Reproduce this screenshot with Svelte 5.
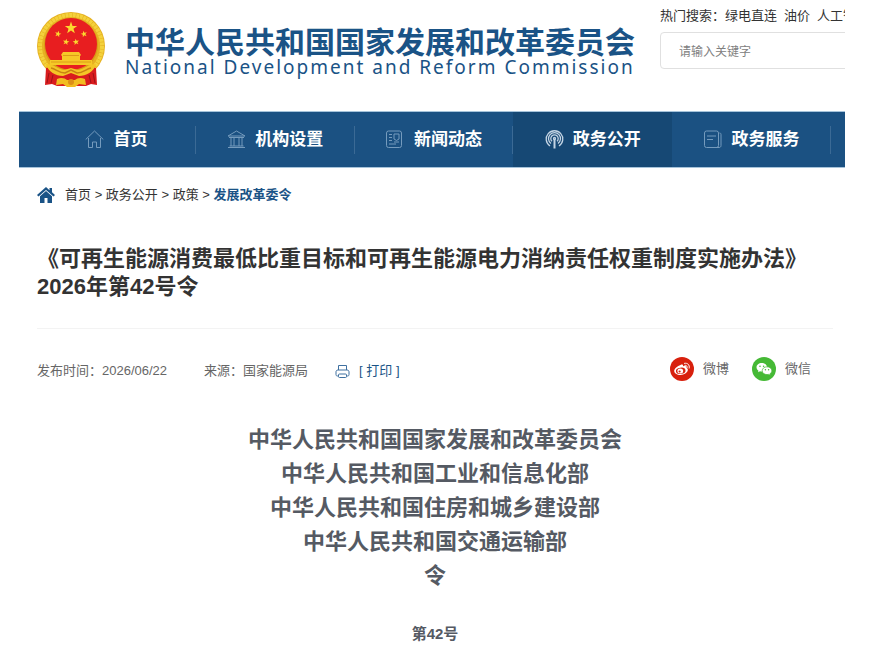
<script>
  const hotWords = ['绿电直连', '油价', '人工智能'];

  const navItems = [
    { label: '首页', icon: 'home' },
    { label: '机构设置', icon: 'org' },
    { label: '新闻动态', icon: 'news' },
    { label: '政务公开', icon: 'open', active: true },
    { label: '政务服务', icon: 'service' },
  ];

  const crumbs = ['首页', '政务公开', '政策'];

  const issuers = [
    '中华人民共和国国家发展和改革委员会',
    '中华人民共和国工业和信息化部',
    '中华人民共和国住房和城乡建设部',
    '中华人民共和国交通运输部',
    '令',
  ];

  let keyword = $state('');

  // points of a five-pointed star
  const star = (cx, cy, r, turn = 0) =>
    Array.from({ length: 10 }, (_, i) => {
      const a = ((i * 36 - 90 + turn) * Math.PI) / 180;
      const d = i % 2 ? r * 0.4 : r;
      return `${(cx + d * Math.cos(a)).toFixed(2)},${(cy + d * Math.sin(a)).toFixed(2)}`;
    }).join(' ');
</script>

<div class="page">
  <header>
    <a class="brand" href="#home">
      <svg class="emblem" viewBox="0 0 69 75" aria-hidden="true">
        <circle cx="34" cy="34" r="34" fill="#e6b122" />
        <circle cx="34" cy="34" r="31" fill="none" stroke="#f4d23c" stroke-width="4" stroke-dasharray="3 .6" />
        <circle cx="34" cy="33" r="27" fill="#d99a16" />
        <circle cx="34" cy="32" r="26" fill="#e81e20" />
        <g fill="#fbd92f">
          <polygon points={star(34, 16, 6.5)} />
          <polygon points={star(21, 22, 3.4, 15)} />
          <polygon points={star(47, 22, 3.4, -15)} />
          <polygon points={star(29, 30, 3.4, 10)} />
          <polygon points={star(39, 30, 3.4, -10)} />
        </g>
        <path d="M26 40h16l2 3-1 1v4h12v5H13v-5h12v-4l-1-1z" fill="#f6c927" />
        <path d="M26 43.500h16M14 50h40" stroke="#dd9c18" stroke-width="1" />
        <path d="M9 56c7-3 12 3 17 5h16c5-2 10-8 17-5l1 17-6-1-5 2H20l-5-2-7 1z" fill="#d91c1e" />
        <path d="M9 52c7 0 12 5 18 6l7-2 7 2c6-1 11-6 18-6-2 8-10 12-17 12l-8-3-8 3C19 64 11 60 9 52z" fill="#f4c526" />
        <path d="M14 56c5 1 8 5 14 5l6-3 6 3c6 0 9-4 14-5" fill="none" stroke="#c98312" stroke-width="1.500" />
        <path d="M20 67c4-2 8-1 10 1h8c2-2 6-3 10-1l1 6-7-1-4 3h-8l-4-3-7 1z" fill="#f2bd22" />
        <circle cx="34" cy="70" r="3" fill="#dc8f18" />
        <path d="M12 61l-2 10M16 63l-2 8M56 61l2 10M52 63l2 8" stroke="#9f1218" stroke-width="1" />
      </svg>
      <span class="brand-text">
        <span class="brand-cn">中华人民共和国国家发展和改革委员会</span>
        <span class="brand-en" lang="en">National Development and Reform Commission</span>
      </span>
    </a>

    <form class="search" onsubmit={(e) => e.preventDefault()}>
      <p>
        热门搜索：{#each hotWords as word}<a href="#search">{word}</a>{/each}
      </p>
      <input type="text" aria-label="关键字" placeholder="请输入关键字" bind:value={keyword} />
    </form>
  </header>

  <nav>
    {#each navItems as item}
      <a href="#nav" class:active={item.active}>
        <svg viewBox="0 0 19 19" aria-hidden="true">
          {#if item.icon === 'home'}
            <path d="M.7 9.500L9.500 1l8.800 8.500M3.500 8v9.500h4V12h4v5.500h4V8" />
          {:else if item.icon === 'org'}
            <path d="M1 6L9.500 1 18 6zM2 7.500h15M4 8v8M7 8v8M12 8v8M15 8v8M2.500 16h14M1 17.500h17" />
          {:else if item.icon === 'news'}
            <rect x=".5" y="1" width="15" height="16.500" rx="2" />
            <path d="M3 4.500h3M3 7.500h3M3 10.500h3M3 14h7M8 4h5v5l-2.500 1.500L8 9zM8 12h5" />
          {:else if item.icon === 'open'}
            <path d="M5 16a8.300 8.300 0 1 1 9 0M6 13.500a6 6 0 1 1 7 0M7 11.300a3.700 3.700 0 1 1 5 0" />
            <path d="M9.500 9v9.500" stroke-width="2" />
            <circle cx="9.500" cy="8.500" r="1" />
          {:else}
            <rect x=".5" y="1" width="14" height="16.500" rx="2" />
            <path d="M3 6h9M3 9.500h6M15.500 3c1.500 0 1.500 1 1.500 2v10.500c0 1.500-1 2-2 2h-3" />
          {/if}
        </svg>
        <span>{item.label}</span>
      </a>
    {/each}
  </nav>

  <main>
    <div class="crumbs">
      <svg viewBox="0 0 18 16" aria-hidden="true">
        <path d="M9 0L0 8l1.500 1.500L9 3l7.500 6.500L18 8l-3-2.700V1h-2.500v2.200z" />
        <path d="M9 4L3 9.200V16h4.500v-5h3v5H15V9.200z" />
      </svg>
      <span>
        {#each crumbs as crumb}<a href="#crumb">{crumb}</a>{' > '}{/each}<a class="current" href="#crumb">发展改革委令</a>
      </span>
    </div>

    <h1>《可再生能源消费最低比重目标和可再生能源电力消纳责任权重制度实施办法》2026年第42号令</h1>

    <div class="meta">
      <span class="date">发布时间：<time datetime="2026-06-22">2026/06/22</time></span>
      <span class="source">来源：国家能源局</span>
      <button type="button" class="print" onclick={() => window.print()}>
        <svg viewBox="0 0 15 15" aria-hidden="true">
          <path d="M3.500 6V1.500h8V6M3.500 12H2.500C1.500 12 1 11.500 1 10.500V8c0-1 .5-2 2-2h9c1.500 0 2 1 2 2v2.500c0 1-.5 1.500-1.500 1.500h-1" />
          <rect x="3.500" y="10" width="8" height="3.500" rx="1" />
        </svg>
        [ 打印 ]
      </button>
      <div class="share">
        <a href="#weibo">
          <svg viewBox="0 0 24 24" aria-hidden="true">
            <circle cx="12" cy="12" r="12" fill="#d8200d" />
            <path d="M10.500 8c1.500-.8 3-.5 2.500 1.300 2-.7 3.800-.3 3.200 1.500 1.300.4 1.900 1.300 1.600 2.500-.5 2.500-3.600 4.700-7.300 4.700-3.600 0-6.300-1.700-6.300-4.200C4.200 11.700 7.500 9 10.500 8z" fill="#fff" />
            <ellipse cx="10.700" cy="13.800" rx="4.800" ry="3.100" transform="rotate(-8 10.700 13.800)" fill="#d8200d" />
            <ellipse cx="10.300" cy="14" rx="2.900" ry="2.500" fill="#fff" />
            <circle cx="9.600" cy="14.500" r="1.100" fill="#d8200d" />
            <path d="M14.500 6.300c3-.7 5.500 1.600 4.700 4.800M14.900 8.300c1.500-.3 2.600.9 2.200 2.300" fill="none" stroke="#fff" stroke-linecap="round" />
          </svg>
          微博
        </a>
        <a href="#wechat">
          <svg viewBox="0 0 24 24" aria-hidden="true">
            <circle cx="12" cy="12" r="12" fill="#45b935" />
            <path d="M9.800 6C6.800 6 4.500 7.900 4.500 10.300c0 1.400.8 2.600 2 3.400L6 15.300l2-1c.6.2 1.200.3 1.800.3 3 0 5.300-1.900 5.300-4.300S12.800 6 9.800 6z" fill="#fff" />
            <path d="M15 9.800c-2.700 0-4.800 1.700-4.800 3.900s2.100 3.900 4.800 3.900c.6 0 1.100-.1 1.600-.2l1.700.9-.4-1.500c1.200-.7 1.900-1.800 1.900-3.100 0-2.200-2.100-3.900-4.800-3.900z" fill="#fff" stroke="#45b935" stroke-width=".7" />
            <g fill="#45b935">
              <circle cx="8" cy="9.200" r=".8" />
              <circle cx="11.600" cy="9.200" r=".8" />
              <circle cx="13.400" cy="12.700" r=".7" />
              <circle cx="16.600" cy="12.700" r=".7" />
            </g>
          </svg>
          微信
        </a>
      </div>
    </div>

    <article>
      <h2>
        {#each issuers as line}<span>{line}</span>{/each}
      </h2>
      <p>第42号</p>
    </article>
  </main>
</div>

<style>
  :global(body) { margin: 0; background: #fff; }

  .page {
    margin: 0 28px 0 19px;
    font: 13px/20px "Liberation Sans", "Noto Sans CJK SC", sans-serif;
    color: #333;
  }
  a { color: inherit; text-decoration: none; }
  svg { display: block; flex: none; }

  header {
    display: flex; align-items: flex-start;
    height: 111px; padding-left: 18px; overflow: hidden;
  }
  .brand { display: flex; gap: 19px; padding-top: 12px; color: #1a5386; white-space: nowrap; }
  .emblem { width: 69px; height: 75px; }
  .brand-text { display: flex; flex-direction: column; padding-top: 18px; }
  .brand-cn { font-size: 30px; line-height: 26px; font-weight: bold; }
  .brand-en { font: 19px/22px "Noto Sans", "Open Sans", sans-serif; letter-spacing: 2px; }

  /* the search box runs past the right edge of the header */
  .search { flex: none; width: 260px; margin-left: auto; margin-right: -75px; padding-top: 6px; }
  .search p { margin: 0; white-space: nowrap; }
  .search a { margin-right: 7px; }
  .search input {
    box-sizing: border-box; width: 100%; height: 37px; margin-top: 6px; padding: 0 18px;
    border: 1px solid #e0e0e0; border-radius: 4px; background: #fff; outline: none;
    font: 12px "Noto Sans CJK SC", sans-serif; color: #333;
  }
  .search input::placeholder { color: #808080; opacity: 1; }

  nav {
    display: flex; height: 55px; padding: 0 14px 0 18px;
    background: #1b5182; border-top: 1px solid #a6c3da; border-bottom: 1px solid #a6c3da;
  }
  nav a {
    flex: 1; display: flex; align-items: center; justify-content: center; gap: 9px;
    color: #fff; font-size: 17px; font-weight: bold; white-space: nowrap;
    background: linear-gradient(#3b6a95, #3b6a95) right center / 1px 28px no-repeat;
  }
  nav a.active { background: #164874; }
  nav svg {
    width: 19px; height: 19px;
    fill: none; stroke: #759bbd; stroke-width: 1;
  }
  nav a.active svg { stroke: #c3d4e4; stroke-width: 1.3; }

  main { padding: 0 12px 0 18px; }

  .crumbs { display: flex; align-items: center; gap: 10px; padding-top: 17px; }
  .crumbs svg { width: 18px; height: 16px; fill: #1a5386; }
  .crumbs .current { color: #1a5386; font-weight: bold; }

  h1 {
    margin: 40px 0 0; padding-bottom: 27px; border-bottom: 1px solid #f3f3f3;
    font-size: 22px; line-height: 28px;
  }

  .meta { display: flex; align-items: flex-end; padding: 28px 22px 0 0; color: #666; }
  .source { margin-left: 37px; }
  .print {
    display: flex; align-items: center; gap: 9px; margin-left: 27px; padding: 0;
    border: 0; background: none; font: inherit; color: #1a5386; cursor: pointer;
  }
  .print svg { width: 15px; height: 15px; fill: none; stroke: #3f70a0; }
  .share { display: flex; gap: 23px; margin-left: auto; }
  .share a { display: flex; align-items: center; gap: 9px; }
  .share svg { width: 24px; height: 24px; }

  article { padding-top: 42px; text-align: center; color: #555a63; font-weight: bold; }
  h2 { margin: 0; font-size: 22px; line-height: 34px; }
  h2 span { display: block; }
  article p { margin: 31px 0 0; font-size: 15px; }
</style>
